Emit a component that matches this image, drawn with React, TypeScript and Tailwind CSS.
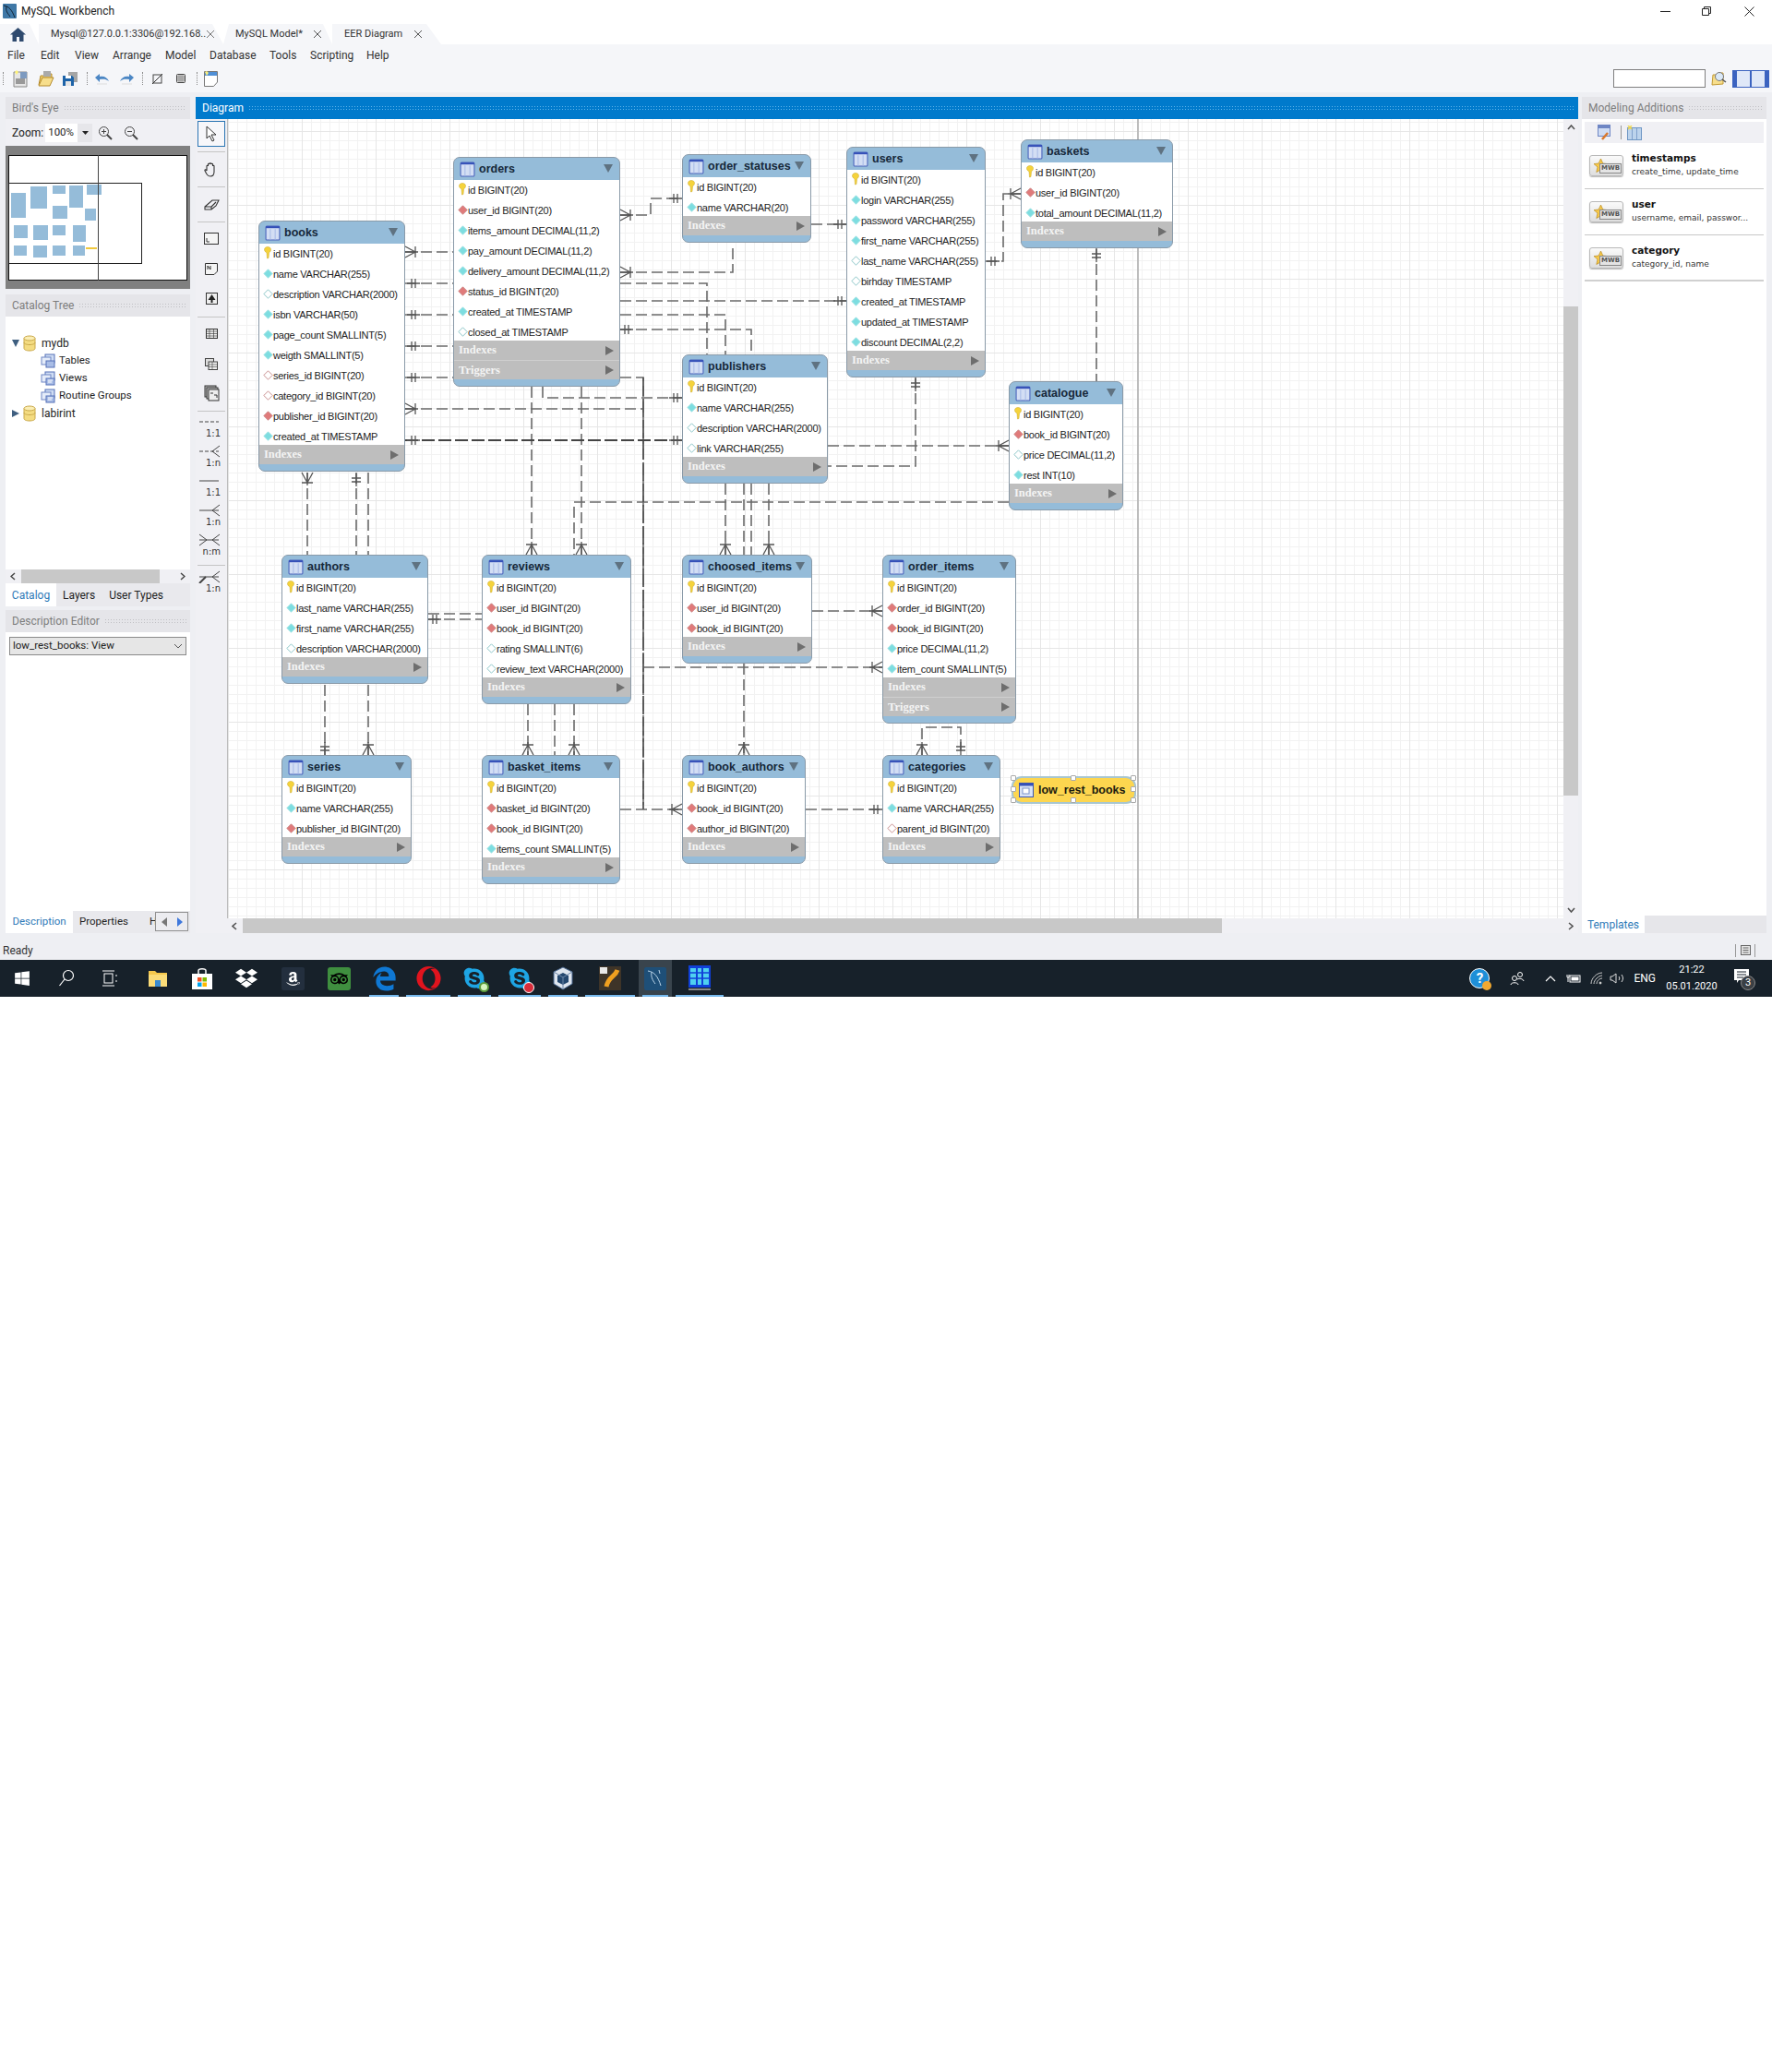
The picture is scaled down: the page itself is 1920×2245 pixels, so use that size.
import React from "react";
import { FaWindows, FaDropbox, FaAmazon, FaTripadvisor, FaOpera, FaSkype, FaEdgeLegacy } from "react-icons/fa";

type K = "k" | "c" | "o" | "r" | "p";
type T = { n: string; x: number; y: number; w: number; rows: [K, string][]; trig?: boolean };

const C = { x: 247, y: 129 };

const tables: T[] = [
  { n: "books", x: 280, y: 239, w: 159, rows: [["k", "id BIGINT(20)"], ["c", "name VARCHAR(255)"], ["o", "description VARCHAR(2000)"], ["c", "isbn VARCHAR(50)"], ["c", "page_count SMALLINT(5)"], ["c", "weigth SMALLINT(5)"], ["p", "series_id BIGINT(20)"], ["p", "category_id BIGINT(20)"], ["r", "publisher_id BIGINT(20)"], ["c", "created_at TIMESTAMP"]] },
  { n: "orders", x: 491, y: 170, w: 181, trig: true, rows: [["k", "id BIGINT(20)"], ["r", "user_id BIGINT(20)"], ["c", "items_amount DECIMAL(11,2)"], ["c", "pay_amount DECIMAL(11,2)"], ["c", "delivery_amount DECIMAL(11,2)"], ["r", "status_id BIGINT(20)"], ["c", "created_at TIMESTAMP"], ["o", "closed_at TIMESTAMP"]] },
  { n: "order_statuses", x: 739, y: 167, w: 140, rows: [["k", "id BIGINT(20)"], ["c", "name VARCHAR(20)"]] },
  { n: "publishers", x: 739, y: 384, w: 158, rows: [["k", "id BIGINT(20)"], ["c", "name VARCHAR(255)"], ["o", "description VARCHAR(2000)"], ["o", "link VARCHAR(255)"]] },
  { n: "users", x: 917, y: 159, w: 151, rows: [["k", "id BIGINT(20)"], ["c", "login VARCHAR(255)"], ["c", "password VARCHAR(255)"], ["c", "first_name VARCHAR(255)"], ["o", "last_name VARCHAR(255)"], ["o", "birhday TIMESTAMP"], ["c", "created_at TIMESTAMP"], ["c", "updated_at TIMESTAMP"], ["c", "discount DECIMAL(2,2)"]] },
  { n: "baskets", x: 1106, y: 151, w: 165, rows: [["k", "id BIGINT(20)"], ["r", "user_id BIGINT(20)"], ["c", "total_amount DECIMAL(11,2)"]] },
  { n: "catalogue", x: 1093, y: 413, w: 124, rows: [["k", "id BIGINT(20)"], ["r", "book_id BIGINT(20)"], ["o", "price DECIMAL(11,2)"], ["c", "rest INT(10)"]] },
  { n: "authors", x: 305, y: 601, w: 159, rows: [["k", "id BIGINT(20)"], ["c", "last_name VARCHAR(255)"], ["c", "first_name VARCHAR(255)"], ["o", "description VARCHAR(2000)"]] },
  { n: "reviews", x: 522, y: 601, w: 162, rows: [["k", "id BIGINT(20)"], ["r", "user_id BIGINT(20)"], ["r", "book_id BIGINT(20)"], ["o", "rating SMALLINT(6)"], ["o", "review_text VARCHAR(2000)"]] },
  { n: "choosed_items", x: 739, y: 601, w: 141, rows: [["k", "id BIGINT(20)"], ["r", "user_id BIGINT(20)"], ["r", "book_id BIGINT(20)"]] },
  { n: "order_items", x: 956, y: 601, w: 145, trig: true, rows: [["k", "id BIGINT(20)"], ["r", "order_id BIGINT(20)"], ["r", "book_id BIGINT(20)"], ["c", "price DECIMAL(11,2)"], ["c", "item_count SMALLINT(5)"]] },
  { n: "series", x: 305, y: 818, w: 141, rows: [["k", "id BIGINT(20)"], ["c", "name VARCHAR(255)"], ["r", "publisher_id BIGINT(20)"]] },
  { n: "basket_items", x: 522, y: 818, w: 150, rows: [["k", "id BIGINT(20)"], ["r", "basket_id BIGINT(20)"], ["r", "book_id BIGINT(20)"], ["c", "items_count SMALLINT(5)"]] },
  { n: "book_authors", x: 739, y: 818, w: 134, rows: [["k", "id BIGINT(20)"], ["r", "book_id BIGINT(20)"], ["r", "author_id BIGINT(20)"]] },
  { n: "categories", x: 956, y: 818, w: 128, rows: [["k", "id BIGINT(20)"], ["c", "name VARCHAR(255)"], ["p", "parent_id BIGINT(20)"]] },
];

// connector paths in page coordinates
const lines: string[] = [
  "M439 273H491",
  "M439 307H491",
  "M439 341H491",
  "M439 375H491",
  "M439 409H491",
  "M672 409H697V877",
  "M439 443H697",
  "M672 233H705V215H739",
  "M672 295H794V264",
  "M672 307H766V384",
  "M672 326H917",
  "M672 341H786V384",
  "M672 357H814V384",
  "M576 419V601",
  "M630 419V601",
  "M588 419V431H739",
  "M879 243H917",
  "M1068 283H1087V210H1106",
  "M1188 269V413",
  "M992 409V505H897",
  "M897 483H1093",
  "M1093 544H622V601",
  "M786 524V601",
  "M806 524V601",
  "M814 524V601",
  "M833 524V601",
  "M697 723H956",
  "M806 719V818",
  "M880 662H956",
  "M464 665H522",
  "M464 671H522",
  "M333 512V601",
  "M386 512V601",
  "M399 512V601",
  "M352 742V818",
  "M399 742V818",
  "M572 763V818",
  "M601 763V818",
  "M622 763V818",
  "M672 877H739",
  "M873 877H956",
  "M999 818V788H1041V818",
];

function crowH(x: number, y: number, d: number) {
  return `M${x} ${y - 6}L${x + d * 11} ${y}L${x} ${y + 6}M${x + d * 11} ${y - 6}V${y + 6}M${x} ${y}H${x + d * 14}`;
}
function crowV(x: number, y: number, d: number) {
  return `M${x - 6} ${y}L${x} ${y + d * 11}L${x + 6} ${y}M${x - 6} ${y + d * 11}H${x + 6}M${x} ${y}V${y + d * 14}`;
}
function barsH(x: number, y: number, d: number) {
  return `M${x + d * 5} ${y - 5}V${y + 5}M${x + d * 9} ${y - 5}V${y + 5}M${x} ${y}H${x + d * 14}`;
}
function barsV(x: number, y: number, d: number) {
  return `M${x - 5} ${y + d * 5}H${x + 5}M${x - 5} ${y + d * 9}H${x + 5}M${x} ${y}V${y + d * 14}`;
}

const marks: string[] = [
  crowH(439, 273, 1),
  barsH(441, 307, 1),
  barsH(441, 341, 1),
  barsH(441, 375, 1),
  barsH(441, 409, 1),
  crowH(439, 443, 1),
  barsH(441, 477, 1),
  barsH(739, 477, -1),
  crowH(672, 233, 1),
  barsH(739, 215, -1),
  crowH(672, 295, 1),
  barsH(672, 357, 1),
  barsH(739, 431, -1),
  barsH(917, 243, -1),
  barsH(917, 326, -1),
  barsH(1069, 283, 1),
  crowH(1106, 210, -1),
  barsV(1188, 270, 1),
  barsV(992, 410, 1),
  crowH(1093, 483, -1),
  crowV(576, 601, -1),
  crowV(630, 601, -1),
  crowV(786, 601, -1),
  crowV(833, 601, -1),
  crowH(956, 662, -1),
  crowH(956, 723, -1),
  crowV(806, 818, -1),
  barsH(464, 671, 1),
  crowV(333, 512, 1),
  barsV(386, 513, 1),
  barsV(352, 818, -1),
  crowV(399, 818, -1),
  crowV(572, 818, -1),
  crowV(622, 818, -1),
  crowH(739, 877, -1),
  barsH(956, 877, -1),
  crowV(999, 818, -1),
  barsV(1041, 818, -1),
];

const tableFont = "[font-family:'Liberation_Sans',sans-serif]";

function TableIcon({ size = 17 }: { size?: number }) {
  return (
    <svg width={size} height={size} viewBox="0 0 16 16" className="shrink-0">
      <rect x="1" y="1" width="14" height="14" rx="1" fill="#d3def4" stroke="#4a62bb" />
      <rect x="1" y="1" width="14" height="2" fill="#3550b8" />
      <path d="M5.5 4V14.5M10.5 4V14.5" stroke="#a9bbe6" />
    </svg>
  );
}

function FieldIcon({ k }: { k: K }) {
  if (k === "k")
    return (
      <svg width="10" height="14" viewBox="0 0 10 14">
        <path d="M1.5 3.5C1.5 1.5 3 .5 5 .5S8.5 1.5 8.5 3.5C8.5 5.5 7 6 6.5 7L6 12.5L4.5 13L4 7C3 6 1.5 5.5 1.5 3.5Z" fill="#f5d33c" stroke="#c9a627" strokeWidth=".5" />
      </svg>
    );
  const fill = k === "c" ? "#7ddde0" : k === "r" ? "#e07a7a" : "#ffffff";
  const stroke = k === "c" ? "#a8e4e6" : k === "r" ? "#c88" : k === "o" ? "#8cc6c8" : "#c99090";
  return (
    <svg width="11" height="11" viewBox="0 0 11 11">
      <path d="M5.5 .8L10.2 5.5L5.5 10.2L.8 5.5Z" fill={fill} stroke={stroke} />
    </svg>
  );
}

function Section({ label, line }: { label: string; line?: boolean }) {
  return (
    <div className={`h-[21px] bg-[#bebebe] flex items-center justify-between pl-[5px] pr-[6px] ${line ? "border-t border-[#cfcfcf]" : ""}`}>
      <span className="text-[12.5px] font-bold text-[#f4f4f4] [font-family:'Liberation_Serif',serif]">{label}</span>
      <svg width="9" height="10" viewBox="0 0 9 10"><path d="M0 0L9 5L0 10Z" fill="#6e6e6e" /></svg>
    </div>
  );
}

function ErTable({ t }: { t: T }) {
  const h = 25 + t.rows.length * 22 - 2 + (t.trig ? 42 : 21) + 8;
  return (
    <div
      className={`absolute rounded-[7px] overflow-hidden bg-[#95bcd9] border border-[#8a9aa8] flex flex-col ${tableFont}`}
      style={{ left: t.x - C.x, top: t.y - C.y, width: t.w, height: h }}
    >
      <div className="h-[24px] shrink-0 flex items-center pl-[6px] pr-[7px]">
        <TableIcon />
        <span className="ml-[4px] flex-1 text-[12.5px] font-bold text-[#16283a] whitespace-nowrap">{t.n}</span>
        <svg width="10" height="10" viewBox="0 0 10 10" className="mb-[3px]"><path d="M0 1H10L5 10Z" fill="#5f7281" /></svg>
      </div>
      <div className="bg-white shrink-0" style={{ height: t.rows.length * 22 - 2 }}>
        {t.rows.map((r, i) => (
          <div key={i} className="h-[22px] flex items-center pl-[3px] whitespace-nowrap">
            <span className="w-[12px] flex justify-center -mt-[2px]"><FieldIcon k={r[0]} /></span>
            <span className="text-[11px] text-[#222] mt-[1px] tracking-[-0.25px]">{r[1]}</span>
          </div>
        ))}
      </div>
      <Section label="Indexes" />
      {t.trig && <Section label="Triggers" line />}
    </div>
  );
}

function PanelHeader({ title, active, dots = true }: { title: string; active?: boolean; dots?: boolean }) {
  return (
    <div className={`h-[24px] flex items-center pl-[7px] pr-[4px] text-[12px] ${active ? "bg-[#007acc] text-white" : "bg-[#e5e5e9] text-[#7d7d7d]"}`}>
      <span className="whitespace-nowrap">{title}</span>
      {dots && <span className={`flex-1 ml-[5px] h-[6px] bg-[length:3px_3px] ${active ? "bg-[radial-gradient(#5fb4ea_1px,transparent_1px)]" : "bg-[radial-gradient(#c0c0c4_1px,transparent_1px)]"}`} />}
    </div>
  );
}

function Cyl() {
  return (
    <svg width="14" height="18" viewBox="0 0 14 18">
      <path d="M1 3.5V14.5C1 16 3.5 17 7 17S13 16 13 14.5V3.5" fill="#f4dc82" stroke="#c9a84a" />
      <ellipse cx="7" cy="3.5" rx="6" ry="2.5" fill="#fbeeb4" stroke="#c9a84a" />
      <path d="M1 8C1 9.5 3.5 10.5 7 10.5S13 9.5 13 8" fill="none" stroke="#c9a84a" />
    </svg>
  );
}

function TreeIcon({ v }: { v: number }) {
  return (
    <svg width="16" height="16" viewBox="0 0 16 16">
      <rect x="5" y="1" width="10" height="9" fill="#cfdcf3" stroke="#5570b8" />
      <rect x="1" y="4" width="10" height="8" fill="#e5ecf9" stroke="#6e86c4" />
      <rect x="6" y="8" width="9" height="7" fill="#a9bde6" stroke="#5570b8" />
      {v > 0 && <path d="M8 10H13M8 12H12" stroke="#fff" />}
    </svg>
  );
}

function Minimap() {
  const blocks = [
    [12, 209, 16, 27], [33, 202, 18, 24], [57, 201, 14, 9], [75, 201, 15, 24], [94, 200, 16, 11],
    [57, 223, 16, 14], [92, 226, 12, 13], [15, 244, 15, 14], [36, 244, 16, 16], [57, 244, 14, 11], [79, 244, 14, 18],
    [15, 266, 14, 11], [36, 266, 15, 13], [57, 266, 14, 11], [79, 266, 13, 11],
  ];
  return (
    <div className="h-[155px] bg-[#808080] relative">
      <div className="absolute left-[3px] right-[3px] top-[10px] h-[136px] bg-white border-[1.5px] border-[#111]" />
      <div className="absolute left-[3px] top-[40px] w-[145px] h-[88px] border-[1.5px] border-[#222]" />
      {blocks.map((b, i) => (
        <div key={i} className="absolute bg-[#95bcd9]" style={{ left: b[0] - 6, top: b[1] - 158, width: b[2], height: b[3] }} />
      ))}
      <div className="absolute left-[87px] top-[110px] w-[12px] h-[2px] bg-[#f0c83c]" />
      <div className="absolute left-[100px] top-[10px] w-px h-[136px] bg-[#444]" />
    </div>
  );
}

function Rel({ label, solid, left, right, pick }: { label: string; solid?: boolean; left?: boolean; right?: boolean; pick?: boolean }) {
  return (
    <div className="h-[32px] w-full relative flex flex-col items-end pr-[7px] text-[#333]">
      <svg width="24" height="14" viewBox="0 0 24 14" className="mt-[3px]">
        <path d={`M1 7H22`} stroke="#444" strokeDasharray={solid ? undefined : "4 2"} fill="none" />
        {right && <path d="M23 1L15 7L23 13" stroke="#444" fill="none" />}
        {left && <path d="M1 1L9 7L1 13" stroke="#444" fill="none" />}
        {pick && <path d="M1 14L8 7" stroke="#444" strokeWidth="2" />}
      </svg>
      <span className="text-[10px] leading-[12px] [font-family:'DejaVu_Sans',sans-serif]">{label}</span>
    </div>
  );
}

function Tool({ h, children }: { h: number; children: React.ReactNode }) {
  return <div className="w-full flex items-center justify-center" style={{ height: h }}>{children}</div>;
}

const Sep = () => <div className="h-px w-[30px] ml-[2px] bg-[#c5c5c5]" />;

function ToolStrip() {
  const s = { fill: "none", stroke: "#333", strokeWidth: 1.1 };
  return (
    <div className="w-[34px] shrink-0 bg-[#f0f0f4] flex flex-col">
      <div className="h-[2px]" />
      <div className="h-[28px] w-[30px] ml-[2px] border border-[#2a75b3] bg-[#f7f7fa] flex items-center justify-center">
        <svg width="14" height="18" viewBox="0 0 14 18"><path d="M2 1V14L5 11L8 17L10 16L7 10H12Z" fill="#fff" stroke="#333" /></svg>
      </div>
      <div className="h-[5px]" />
      <Sep />
      <Tool h={37}><svg width="18" height="18" viewBox="0 0 18 18"><path d="M4 10V5C4 4 5.5 4 5.5 5V3C5.5 2 7 2 7 3V2.5C7 1.5 8.7 1.5 8.7 2.5V3C8.7 2 10.5 2 10.5 3V5C10.5 4 12 4 12 5V11C12 14 11 16 8 16S4 14 2 10C1.5 9 3 8 4 10Z" {...s} /></svg></Tool>
      <Sep />
      <Tool h={37}><svg width="17" height="14" viewBox="0 0 17 14"><path d="M1 9L9 2H16L13 8L8 12H1ZM1 9H8V12M8 9L13 4" {...s} /></svg></Tool>
      <Sep />
      <div className="h-[2px]" />
      <Tool h={32}><svg width="16" height="14" viewBox="0 0 16 14"><rect x=".5" y=".5" width="15" height="12" fill="#f5f5f5" stroke="#333" /><path d="M3 6V10H6" stroke="#333" fill="none" /></svg></Tool>
      <Tool h={32}><svg width="14" height="13" viewBox="0 0 14 13"><path d="M.5.5H13.5V9L10 12.5H.5Z" fill="#f5f5f5" stroke="#333" /><path d="M3 7V3L6 7V3" stroke="#333" fill="none" /></svg></Tool>
      <Tool h={32}><svg width="13" height="13" viewBox="0 0 13 13"><rect x=".5" y=".5" width="12" height="12" fill="#eee" stroke="#333" /><path d="M6.5 2L10.5 8H7.5V11H5.5V8H2.5Z" fill="#222" /></svg></Tool>
      <div className="h-[4px]" />
      <Sep />
      <Tool h={34}><svg width="13" height="11" viewBox="0 0 13 11"><rect x=".5" y=".5" width="12" height="10" fill="#eee" stroke="#333" /><path d="M.5 3H12.5M.5 5.5H12.5M.5 8H12.5M4 1V11M8.5 1V11" stroke="#333" strokeWidth=".6" /></svg></Tool>
      <Tool h={32}><svg width="14" height="13" viewBox="0 0 14 13"><rect x=".5" y=".5" width="9" height="8" fill="#ddd" stroke="#444" /><rect x="4" y="4" width="9.5" height="8.5" fill="#eee" stroke="#444" /><path d="M4 7H13M4 9.5H13M8 4V12" stroke="#444" strokeWidth=".6" /></svg></Tool>
      <Tool h={32}><svg width="17" height="18" viewBox="0 0 17 18"><rect x="1" y="1" width="12" height="12" fill="#bbb" stroke="#333" /><rect x="3" y="3" width="12" height="12" fill="#ccc" stroke="#333" /><rect x="5" y="5" width="11" height="12" fill="#eee" stroke="#333" /><path d="M7 9H10M11 11H14V14" stroke="#333" fill="none" /></svg></Tool>
      <div className="h-[3px]" />
      <Sep />
      <div className="h-[1px]" />
      <Rel label="1:1" />
      <Rel label="1:n" right />
      <Rel label="1:1" solid />
      <Rel label="1:n" solid right />
      <Rel label="n:m" solid left right />
      <div className="h-[5px]" />
      <Sep />
      <div className="h-[2px]" />
      <Rel label="1:n" solid right pick />
    </div>
  );
}

function Sheet() {
  return (
    <svg width="18" height="20" viewBox="0 0 18 20">
      <path d="M2 3H16V19H2Z" fill="#e6e6e6" stroke="#888" />
      <rect x="4" y="10" width="10" height="6" fill="#999" />
      <path d="M3 3L5 1L7 3L5 6Z" fill="#fff37a" />
      <rect x="9" y="3" width="7" height="7" fill="#7d9ac0" />
    </svg>
  );
}

function TopToolbar() {
  const Dash = () => <div className="w-px h-[14px] border-l border-dotted border-[#888]" />;
  return (
    <div className="h-[30px] bg-[#f5f6f9] flex items-center pl-[3px] relative">
      <Dash />
      <div className="ml-[9px]"><Sheet /></div>
      <div className="ml-[10px]">
        <svg width="18" height="18" viewBox="0 0 18 18"><path d="M1 16L3 6H8L10 4H15V9" fill="#f1cf6b" stroke="#b48a2c" /><path d="M1 17L5 8H17L13 17Z" fill="#f7de8b" stroke="#b48a2c" /><rect x="6" y="1" width="8" height="6" fill="#aaa" /></svg>
      </div>
      <div className="ml-[8px]">
        <svg width="18" height="17" viewBox="0 0 18 17"><rect x="7" y="1" width="10" height="11" fill="#a5a5a5" /><path d="M1 5H11L13 7V16H1Z" fill="#1d63a8" /><rect x="4" y="11" width="6" height="5" fill="#e5e5e5" /><rect x="4" y="5" width="6" height="3" fill="#fff" /></svg>
      </div>
      <div className="ml-[9px]"><Dash /></div>
      <div className="ml-[7px]">
        <svg width="17" height="14" viewBox="0 0 17 14"><path d="M1 6L6 2V5C11 4 14 6 16 10C13 7.5 10 7.5 6 8V11Z" fill="#4b86c4" /><path d="M3 13H14" stroke="#ddd" /></svg>
      </div>
      <div className="ml-[10px]">
        <svg width="17" height="14" viewBox="0 0 17 14"><path d="M16 6L11 2V5C6 4 3 6 1 10C4 7.5 7 7.5 11 8V11Z" fill="#4b86c4" /><path d="M3 13H14" stroke="#ddd" /></svg>
      </div>
      <div className="ml-[8px]"><Dash /></div>
      <div className="ml-[9px]">
        <svg width="13" height="13" viewBox="0 0 13 13"><rect x="2" y="2" width="9" height="9" fill="none" stroke="#444" /><path d="M1 12L12 1M2 11L11 2" stroke="#333" /></svg>
      </div>
      <div className="ml-[14px]">
        <svg width="10" height="10" viewBox="0 0 10 10"><rect x=".5" y=".5" width="9" height="9" rx="1" fill="#ddd" stroke="#444" /><path d="M3 1V9M5 1V9M7 1V9M1 3H9M1 5H9M1 7H9" stroke="#666" strokeWidth=".5" /></svg>
      </div>
      <div className="ml-[12px]"><Dash /></div>
      <div className="ml-[7px]">
        <svg width="15" height="17" viewBox="0 0 15 17"><path d="M.5.5H14.5V12L10.5 16.5H.5Z" fill="#fff" stroke="#777" /><rect x="1" y="1" width="13" height="4" fill="#4f8fd6" /><path d="M1 1L3 0L5 2L3 5Z" fill="#fdf07a" /></svg>
      </div>
      <div className="ml-auto flex items-center pr-[3px]">
        <div className="w-[100px] h-[20px] bg-white border border-[#7f7f7f]" />
        <div className="ml-[6px] mr-[6px]">
          <svg width="17" height="18" viewBox="0 0 17 18"><path d="M1 16L2 5H7L8 3H13V15Z" fill="#f7de8b" stroke="#c29a34" /><circle cx="9" cy="7" r="4.5" fill="#dbe9f7" stroke="#777" /><path d="M12 10L16 13" stroke="#555" strokeWidth="1.5" /></svg>
        </div>
        <div className="w-[20px] h-[19px] bg-[#dfe8f8] border-[1.5px] border-[#3b63c0] border-l-[5px]" />
        <div className="w-[20px] h-[19px] bg-[#dfe8f8] border-[1.5px] border-[#3b63c0] border-r-[5px]" />
      </div>
    </div>
  );
}

function Canvas() {
  return (
    <div className="flex-1 relative bg-white overflow-hidden border-l border-[#bdbdbd] bg-[linear-gradient(#e6e6e6_1px,transparent_1px),linear-gradient(90deg,#e6e6e6_1px,transparent_1px),linear-gradient(#f2f2f2_1px,transparent_1px),linear-gradient(90deg,#f2f2f2_1px,transparent_1px)] bg-[size:80px_80px,80px_80px,10px_10px,10px_10px] bg-[position:0_13px,0_13px,0_3px,0_3px]">
      <div className="absolute left-[985px] top-0 bottom-0 w-[2px] bg-[#bdbdbd]" />
      <svg className="absolute inset-0" width="1447" height="867" viewBox={`${C.x} ${C.y} 1447 867`} fill="none">
        {lines.map((d, i) => (
          <path key={i} d={d} stroke="#6a6a6a" strokeWidth="1.6" strokeDasharray="12 5" />
        ))}
        <path d="M439 477H739" stroke="#444" strokeWidth="2.2" strokeDasharray="14 4" />
        <path d="M697 409V877" stroke="#555" strokeWidth="1.8" strokeDasharray="20 3" />
        {marks.map((d, i) => (
          <path key={i} d={d} stroke="#555" strokeWidth="1.3" />
        ))}
      </svg>
      {tables.map((t) => (
        <ErTable key={t.n} t={t} />
      ))}
      {/* view: low_rest_books */}
      <div className={`absolute left-[851px] top-[714px] w-[131px] h-[26px] rounded-[9px] bg-[#fdd64f] shadow-[0_0_0_2px_#a8c6d0] flex items-center pl-[6px] ${tableFont}`}>
        <svg width="16" height="16" viewBox="0 0 16 16"><rect x=".5" y=".5" width="15" height="15" fill="#d9e3f6" stroke="#3a55b5" /><rect x="1" y="1" width="14" height="2.5" fill="#3550b8" /><rect x="4" y="6" width="7" height="6" fill="#fff" stroke="#7d94cc" /></svg>
        <span className="ml-[5px] text-[12.5px] font-bold text-[#1c1c10] whitespace-nowrap">low_rest_books</span>
      </div>
      {[[848, 711], [913, 711], [978, 711], [848, 723], [978, 723], [848, 735], [913, 735], [978, 735]].map((p, i) => (
        <div key={i} className="absolute w-[6px] h-[6px] rounded-[1px] bg-white border border-[#aaa]" style={{ left: p[0], top: p[1] }} />
      ))}
    </div>
  );
}

function LeftPanel() {
  return (
    <div className="w-[200px] ml-[6px] shrink-0 flex flex-col text-[12px] text-[#222]">
      <PanelHeader title="Bird's Eye" />
      <div className="h-[29px] flex items-center bg-[#f0f0f4] pl-[7px]">
        <span>Zoom:</span>
        <div className="ml-[2px] w-[35px] h-[20px] bg-white flex items-center pl-[3px] text-[11.5px]">100%</div>
        <div className="w-[16px] h-[20px] bg-[#e6e6ea] flex items-center justify-center">
          <svg width="7" height="4" viewBox="0 0 7 4"><path d="M0 0H7L3.5 4Z" fill="#222" /></svg>
        </div>
        <svg width="16" height="16" viewBox="0 0 16 16" fill="none" stroke="#444" className="ml-[6px]"><circle cx="6.5" cy="6.5" r="5" /><path d="M10 10L15 15" strokeWidth="2" /><path d="M4 6.5H9M6.5 4V9" /></svg>
        <svg width="16" height="16" viewBox="0 0 16 16" fill="none" stroke="#444" className="ml-[12px]"><circle cx="6.5" cy="6.5" r="5" /><path d="M10 10L15 15" strokeWidth="2" /><path d="M4 6.5H9" /></svg>
      </div>
      <Minimap />
      <div className="h-[6px]" />
      <PanelHeader title="Catalog Tree" />
      <div className="h-[274px] bg-white relative text-[11.5px]">
        <div className="absolute left-[7px] top-[20px] flex items-center gap-[4px]">
          <svg width="8" height="8" viewBox="0 0 8 8"><path d="M0 0H8L4 8Z" fill="#3f5f80" /></svg>
          <Cyl />
          <span className="ml-[2px] text-[12px]">mydb</span>
        </div>
        <div className="absolute left-[38px] top-[38px] flex flex-col">
          {["Tables", "Views", "Routine Groups"].map((t, i) => (
            <div key={t} className="h-[19px] flex items-center gap-[4px]">
              <TreeIcon v={i} />
              <span>{t}</span>
            </div>
          ))}
        </div>
        <div className="absolute left-[7px] top-[96px] flex items-center gap-[4px]">
          <svg width="8" height="8" viewBox="0 0 8 8"><path d="M0 0V8L8 4Z" fill="#3f5f80" /></svg>
          <Cyl />
          <span className="ml-[2px] text-[12px]">labirint</span>
        </div>
      </div>
      <div className="h-[15px] bg-[#f0f0f4] flex items-center justify-between px-[5px] relative">
        <div className="absolute left-[17px] top-0 bottom-0 w-[150px] bg-[#c8c8c8]" />
        <svg width="6" height="9" viewBox="0 0 6 9" fill="none" stroke="#444" strokeWidth="1.5"><path d="M5 1L1 4.5L5 8" /></svg>
        <svg width="6" height="9" viewBox="0 0 6 9" fill="none" stroke="#444" strokeWidth="1.5"><path d="M1 1L5 4.5L1 8" /></svg>
      </div>
      <div className="h-[25px] bg-[#e9e9ed] flex items-center">
        <div className="w-[55px] h-full bg-white flex items-center justify-center text-[#2f7ab8]">Catalog</div>
        <span className="ml-[7px]">Layers</span>
        <span className="ml-[15px]">User Types</span>
      </div>
      <div className="h-[4px]" />
      <PanelHeader title="Description Editor" />
      <div className="h-[5px] bg-white" />
      <div className="bg-white px-[4px] pb-[0px]">
        <div className="h-[20px] bg-[#e6e6e6] border border-[#8a8a8a] flex items-center justify-between px-[3px] text-[11.5px]">
          <span>low_rest_books: View</span>
          <svg width="10" height="6" viewBox="0 0 10 6" fill="none" stroke="#555"><path d="M1 1L5 5L9 1" /></svg>
        </div>
      </div>
      <div className="flex-1 bg-white" />
      <div className="h-[24px] bg-[#e9e9ed] flex items-center relative text-[11.5px]">
        <div className="w-[73px] h-full bg-white flex items-center justify-center text-[#2f7ab8]">Description</div>
        <span className="ml-[7px]">Properties</span>
        <span className="ml-[23px]">H</span>
        <div className="absolute left-[162px] top-[1px] w-[36px] h-[21px] border border-[#909090] bg-[#ececf0] flex items-center justify-center gap-[11px]">
          <svg width="6" height="10" viewBox="0 0 6 10"><path d="M6 0V10L0 5Z" fill="#777" /></svg>
          <svg width="6" height="10" viewBox="0 0 6 10"><path d="M0 0V10L6 5Z" fill="#3f78dc" /></svg>
        </div>
      </div>
    </div>
  );
}

function DiagramPanel() {
  return (
    <div className="w-[1498px] ml-[6px] shrink-0 flex flex-col">
      <PanelHeader title="Diagram" active />
      <div className="flex-1 flex min-h-0">
        <ToolStrip />
        <div className="flex-1 flex flex-col min-w-0">
          <div className="flex-1 flex min-h-0">
            <Canvas />
            <div className="w-[16px] bg-[#f0f0f4] relative flex flex-col items-center justify-between py-[6px] shrink-0">
              <svg width="9" height="6" viewBox="0 0 9 6" fill="none" stroke="#555" strokeWidth="1.6"><path d="M1 5L4.5 1L8 5" /></svg>
              <div className="absolute left-0 right-0 top-[203px] h-[530px] bg-[#c8c8c8]" />
              <svg width="9" height="6" viewBox="0 0 9 6" fill="none" stroke="#555" strokeWidth="1.6"><path d="M1 1L4.5 5L8 1" /></svg>
            </div>
          </div>
          <div className="h-[16px] bg-[#f0f0f4] relative shrink-0 flex items-center justify-between px-[5px]">
            <div className="absolute left-[17px] top-0 bottom-0 w-[1061px] bg-[#c8c8c8]" />
            <svg width="6" height="9" viewBox="0 0 6 9" fill="none" stroke="#555" strokeWidth="1.6"><path d="M5 1L1 4.5L5 8" /></svg>
            <svg width="6" height="9" viewBox="0 0 6 9" fill="none" stroke="#555" strokeWidth="1.6"><path d="M1 1L5 4.5L1 8" /></svg>
          </div>
        </div>
      </div>
    </div>
  );
}

function Mwb() {
  return (
    <div className="w-[37px] h-[23px] rounded-[3px] border border-[#b8b8b8] bg-[linear-gradient(#fafafa,#dedede)] relative shadow-[0_1px_1px_#bbb] shrink-0">
      <svg width="17" height="17" viewBox="0 0 17 17" className="absolute left-[3px] top-[2px]"><path d="M8.5 1L10.8 6L16 6.6L12 10L13.2 15.5L8.5 12.7L3.8 15.5L5 10L1 6.6L6.2 6Z" fill="#f7c948" stroke="#b98b1e" strokeWidth=".7" /></svg>
      <span className="absolute right-[1px] bottom-[2px] px-[1px] text-[7px] leading-[9px] font-bold bg-[#e4e4e4] text-[#555] border border-[#888] [font-family:'DejaVu_Sans',sans-serif]">MWB</span>
    </div>
  );
}

function RightPanel() {
  const items = [
    ["timestamps", "create_time, update_time"],
    ["user", "username, email, passwor..."],
    ["category", "category_id, name"],
  ];
  return (
    <div className="w-[200px] ml-[4px] shrink-0 flex flex-col text-[12px]">
      <PanelHeader title="Modeling Additions" />
      <div className="flex-1 bg-white flex flex-col">
        <div className="mx-[3px] mt-[3px] h-[23px] bg-[#f0f0f4] flex items-center pl-[14px]">
          <svg width="16" height="17" viewBox="0 0 16 17"><rect x=".5" y=".5" width="13" height="12" fill="#cfdcf3" stroke="#6e86c4" /><rect x="1" y="1" width="12" height="3" fill="#6e86c4" /><path d="M5 16L11 9" stroke="#d9782c" strokeWidth="2.5" /></svg>
          <div className="w-px h-[15px] ml-[9px] bg-[#999]" />
          <svg width="16" height="16" viewBox="0 0 16 16" className="ml-[6px]"><rect x=".5" y="2.5" width="15" height="13" fill="#bcd3ec" stroke="#6e96c4" /><path d="M5.5 3V15M10.5 3V15" stroke="#7fa0cc" /><path d="M1 0L5 4M5 0L1 4" stroke="#eed64a" strokeWidth="1.5" /></svg>
        </div>
        {items.map((it, i) => (
          <div key={it[0]} className={`mx-[3px] h-[50px] flex items-center pl-[5px] ${i === 2 ? "border-b-2 border-[#d0d0d0]" : "border-b border-[#c8c8c8]"}`}>
            <Mwb />
            <div className="ml-[9px] [font-family:'DejaVu_Sans',sans-serif] whitespace-nowrap">
              <div className="text-[10.5px] leading-[14px] font-bold text-[#111]">{it[0]}</div>
              <div className="text-[9px] leading-[17px] text-[#333]">{it[1]}</div>
            </div>
          </div>
        ))}
        <div className="flex-1" />
        <div className="h-[19px] bg-[#e6e6ea] flex">
          <div className="w-[68px] h-full bg-white flex items-center justify-center text-[#2f7ab8]">Templates</div>
        </div>
      </div>
    </div>
  );
}

function Taskbar() {
  const apps: [number, React.ReactNode, boolean?][] = [
    [24, <FaWindows className="text-white text-[18px]" />],
    [72, <svg width="18" height="20" viewBox="0 0 18 20" fill="none" stroke="#fff" strokeWidth="1.2"><circle cx="11" cy="7" r="5.5" /><path d="M7 11L1.5 18" /></svg>],
    [119, <svg width="18" height="18" viewBox="0 0 18 18" fill="none" stroke="#fff"><path d="M1 1H14M1 17H14" /><rect x="3" y="4" width="9" height="10" /><path d="M16 5V7M16 11V13" /></svg>],
    [171, <svg width="22" height="20" viewBox="0 0 22 20"><path d="M1 2H8L10 4H21V19H1Z" fill="#f5c84c" /><path d="M1 6H21V19H1Z" fill="#fbdc78" /><rect x="8" y="12" width="6" height="7" fill="#3a8ad0" /></svg>],
    [219, <svg width="22" height="24" viewBox="0 0 22 24"><path d="M7 7V3.5C7 1 15 1 15 3.5V7" fill="none" stroke="#fff" strokeWidth="1.5" /><rect x="0" y="7" width="22" height="17" fill="#fff" /><rect x="6" y="11" width="4.5" height="4.5" fill="#f25022" /><rect x="11.5" y="11" width="4.5" height="4.5" fill="#7fba00" /><rect x="6" y="16.5" width="4.5" height="4.5" fill="#00a4ef" /><rect x="11.5" y="16.5" width="4.5" height="4.5" fill="#ffb900" /></svg>],
    [267, <FaDropbox className="text-white text-[24px]" />],
    [317, <div className="w-[25px] h-[25px] rounded-[2px] bg-[#232f3e] flex items-center justify-center"><FaAmazon className="text-white text-[17px]" /></div>],
    [367, <div className="w-[25px] h-[25px] rounded-[3px] bg-[#3f8f3f] flex items-center justify-center"><FaTripadvisor className="text-black text-[19px]" /></div>],
    [416, <FaEdgeLegacy className="text-[#0f78d4] text-[27px]" />, true],
    [464, <FaOpera className="text-[#e0141e] text-[27px]" />, true],
    [514, <div className="relative"><FaSkype className="text-[#1ea5e4] text-[26px]" /><span className="absolute -right-[3px] -bottom-[2px] w-[11px] h-[11px] rounded-full bg-[#d6f5c0] border-2 border-[#5a9a3c]" /></div>, true],
    [563, <div className="relative"><FaSkype className="text-[#1ea5e4] text-[26px]" /><span className="absolute -right-[3px] -bottom-[3px] w-[12px] h-[12px] rounded-full bg-[#d92c3a] border border-white" /></div>, true],
    [610, <svg width="22" height="26" viewBox="0 0 22 26"><path d="M11 1L21 6V19L11 25L1 19V6Z" fill="#dfe6ef" stroke="#46658c" /><path d="M11 7L17 10V17L11 20L5 17V10Z" fill="#24486f" /><path d="M1 6L11 12L21 6M11 12V25" stroke="#6d87a8" fill="none" /></svg>, true],
    [661, <svg width="24" height="26" viewBox="0 0 24 26"><rect width="24" height="26" fill="#3e3428" /><rect x="1" y="1" width="8" height="7" fill="#e8e8e8" /><path d="M20 4C18 11 10 11 8 22" stroke="#f0a020" strokeWidth="5" fill="none" /></svg>, true],
    [710, <div className="w-[24px] h-[25px] rounded-[2px] bg-[#1e4f78] flex items-center justify-center"><svg width="18" height="20" viewBox="0 0 18 20" fill="none" stroke="#bcd6ea"><path d="M1 2C8 3 12 8 15 18M5 3C4 8 6 12 9 16M13 1L14 5" /></svg></div>, true],
    [758, <svg width="24" height="28" viewBox="0 0 24 28"><rect width="24" height="24" fill="#1040d8" /><path d="M2 3H8V21H2ZM10 3H14V21H10ZM16 3H22V21H16Z" fill="#4fd0f0" /><path d="M2 8H22M2 14H22" stroke="#1040d8" strokeWidth="1.5" /><rect y="25" width="24" height="2" fill="#888" /></svg>, true],
  ];
  let prev = 0;
  return (
    <div className="h-[40px] bg-[#17212a] flex items-center relative text-white [font-family:Roboto,sans-serif]">
      {apps.map(([cx, icon, running], i) => {
        const left = prev;
        const w = (cx - left) * 2;
        prev = left + w;
        return (
          <div key={i} className={`h-full relative flex items-center justify-center shrink-0 ${cx === 710 ? "bg-[#39444d]" : ""}`} style={{ width: w }}>
            {icon}
            {running && <div className="absolute left-[4px] right-[4px] bottom-0 h-[2px] bg-[#76b9ed]" />}
          </div>
        );
      })}
      <div className="ml-auto flex items-center h-full pr-[19px]">
        <div className="relative w-[22px] h-[22px] rounded-full bg-[#1e8fd8] border border-white flex items-center justify-center text-[15px] font-bold">?<span className="absolute -right-[3px] -bottom-[3px] w-[10px] h-[10px] rounded-full bg-[#f0a830]" /></div>
        <svg width="16" height="16" viewBox="0 0 16 16" fill="none" stroke="#fff" className="ml-[22px]"><circle cx="5" cy="8" r="2.5" /><circle cx="11" cy="4" r="2.5" /><path d="M1 15C1 12 9 12 9 15M8 9C10 8 14 8 15 11" /></svg>
        <svg width="12" height="7" viewBox="0 0 12 7" fill="none" stroke="#fff" strokeWidth="1.2" className="ml-[22px]"><path d="M1 6L6 1L11 6" /></svg>
        <svg width="16" height="10" viewBox="0 0 16 10" className="ml-[11px]" fill="none" stroke="#fff"><path d="M1 1V4H3V1M2 4V9" /><rect x="4" y="2" width="11" height="7" fill="none" /><rect x="5.5" y="3.5" width="8" height="4" fill="#fff" stroke="none" /></svg>
        <svg width="14" height="14" viewBox="0 0 14 14" fill="none" stroke="#ccc" className="ml-[10px]"><path d="M1 13C1 7 7 1 13 1M4 13C4 9 9 4 13 4M7 13C7 10 10 7 13 7" /><circle cx="11" cy="12" r="1" fill="#fff" /></svg>
        <svg width="16" height="14" viewBox="0 0 16 14" fill="none" stroke="#ddd" className="ml-[7px]"><path d="M1 5V9H3L7 12V2L3 5ZM10 5C11 6 11 8 10 9M13 3C15 6 15 8 13 11" /></svg>
        <span className="ml-[10px] text-[12px]">ENG</span>
        <div className="ml-[11px] w-[56px] flex flex-col items-center text-[11px] leading-[18px]">
          <span>21:22</span>
          <span>05.01.2020</span>
        </div>
        <div className="ml-[18px] relative w-[22px] h-[24px]">
          <svg width="16" height="15" viewBox="0 0 16 15" className="absolute left-0 top-[2px]"><path d="M0 0H16V12H5L3 15V12H0Z" fill="#fff" /><path d="M3 3H13M3 6H13M3 9H10" stroke="#17212a" /></svg>
          <span className="absolute left-[7px] top-[9px] w-[16px] h-[16px] rounded-full bg-[#3a3f44] border border-[#888] text-[11px] flex items-center justify-center">3</span>
        </div>
      </div>
    </div>
  );
}

export default function App() {
  const tabs = "h-[22px] bg-[#f5f6f9] flex items-center text-[11px] text-[#333]";
  return (
    <div className="w-[1920px] h-[2245px] bg-white overflow-hidden [font-family:Roboto,sans-serif] text-[#222]">
      {/* title bar */}
      <div className="h-[24px] flex items-center pl-[3px] relative">
        <svg width="15" height="16" viewBox="0 0 15 16"><rect width="15" height="16" rx="1" fill="#3f78a6" /><path d="M1 2C7 3 10 7 13 15M4 3C3 8 5 10 8 14" stroke="#123" fill="none" /></svg>
        <span className="ml-[5px] text-[12px] text-[#222]">MySQL Workbench</span>
        <div className="ml-auto flex items-center">
          <div className="w-[11px] h-px bg-[#222] mr-[34px]" />
          <svg width="10" height="10" viewBox="0 0 10 10" fill="none" stroke="#222" className="mr-[36px]"><path d="M2.5 2.5V.5H9.5V7.5H7.5M.5 2.5H7.5V9.5H.5Z" /></svg>
          <svg width="11" height="11" viewBox="0 0 11 11" stroke="#222" className="mr-[19px]"><path d="M.5.5L10.5 10.5M10.5.5L.5 10.5" /></svg>
        </div>
      </div>
      {/* document tabs */}
      <div className="h-[24px] flex items-end">
        <div className={`${tabs} w-[42px] justify-center [clip-path:polygon(0_0,32px_0,100%_100%,0_100%)]`}>
          <svg width="17" height="15" viewBox="0 0 17 15" className="-ml-[3px]"><path d="M8.5 0L17 7.5H14.5V15H10V10H7V15H2.5V7.5H0Z" fill="#2f4a6e" /></svg>
        </div>
        <div className={`${tabs} w-[200px] pl-[13px] [clip-path:polygon(0_0,calc(100%-12px)_0,100%_100%,0_100%,0_100%)]`}>
          <span className="whitespace-nowrap text-[11px]">Mysql@127.0.0.1:3306@192.168..</span>
          <svg width="8" height="8" viewBox="0 0 8 8" stroke="#777" className="ml-[1px]"><path d="M0 0L8 8M8 0L0 8" /></svg>
        </div>
        <div className={`${tabs} w-[118px] pl-[13px] [clip-path:polygon(6px_0,calc(100%-10px)_0,100%_100%,0_100%)]`}>
          <span>MySQL Model*</span>
          <svg width="8" height="8" viewBox="0 0 8 8" stroke="#555" className="ml-[12px]"><path d="M0 0L8 8M8 0L0 8" /></svg>
        </div>
        <div className={`${tabs} w-[118px] pl-[13px] bg-[#eeeff3] [clip-path:polygon(0_0,calc(100%-16px)_0,100%_100%,0_100%)]`}>
          <span>EER Diagram</span>
          <svg width="8" height="8" viewBox="0 0 8 8" stroke="#555" className="ml-[13px]"><path d="M0 0L8 8M8 0L0 8" /></svg>
        </div>
      </div>
      {/* menu */}
      <div className="h-[22px] bg-[#f5f6f9] flex items-center text-[12px] pl-[8px] pt-[2px] text-[#333]">
        {[["File", 36], ["Edit", 37], ["View", 41], ["Arrange", 57], ["Model", 48], ["Database", 65], ["Tools", 44], ["Scripting", 61], ["Help", 40]].map(([m, w]) => (
          <span key={m as string} style={{ width: w as number }}>{m}</span>
        ))}
      </div>
      <TopToolbar />
      {/* main */}
      <div className="h-[911px] bg-[#eeeff3] pt-[5px] flex">
        <LeftPanel />
        <DiagramPanel />
        <RightPanel />
      </div>
      {/* status */}
      <div className="h-[29px] bg-[#eeeff3] flex items-center pl-[3px] pt-[8px] text-[12px] text-[#333] relative">
        <span>Ready</span>
        <div className="ml-auto mr-[18px] w-[22px] h-[14px] border-x border-[#999] flex items-center justify-center">
          <svg width="11" height="11" viewBox="0 0 11 11" fill="#e6e6e6" stroke="#666"><rect x=".5" y=".5" width="10" height="10" /><path d="M2.5 3H8.5M2.5 5.5H8.5M2.5 8H8.5" /></svg>
        </div>
      </div>
      <Taskbar />
    </div>
  );
}
